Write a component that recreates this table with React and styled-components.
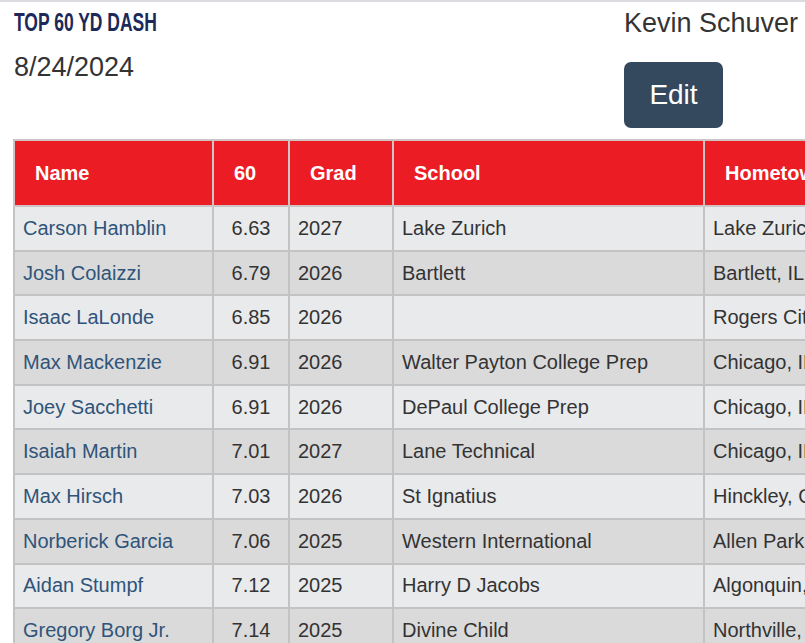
import React from 'react';
import styled, { createGlobalStyle } from 'styled-components';

const GlobalStyle = createGlobalStyle`
  html, body {
    margin: 0;
    padding: 0;
    overflow: hidden;
    background: #ffffff;
    font-family: "Liberation Sans", Arial, sans-serif;
    color: #333333;
  }
`;

const rows = [
  { name: 'Carson Hamblin', time: '6.63', grad: '2027', school: 'Lake Zurich', town: 'Lake Zurich, IL' },
  { name: 'Josh Colaizzi', time: '6.79', grad: '2026', school: 'Bartlett', town: 'Bartlett, IL' },
  { name: 'Isaac LaLonde', time: '6.85', grad: '2026', school: '', town: 'Rogers City, MI' },
  { name: 'Max Mackenzie', time: '6.91', grad: '2026', school: 'Walter Payton College Prep', town: 'Chicago, IL' },
  { name: 'Joey Sacchetti', time: '6.91', grad: '2026', school: 'DePaul College Prep', town: 'Chicago, IL' },
  { name: 'Isaiah Martin', time: '7.01', grad: '2027', school: 'Lane Technical', town: 'Chicago, IL' },
  { name: 'Max Hirsch', time: '7.03', grad: '2026', school: 'St Ignatius', town: 'Hinckley, OH' },
  { name: 'Norberick Garcia', time: '7.06', grad: '2025', school: 'Western International', town: 'Allen Park, MI' },
  { name: 'Aidan Stumpf', time: '7.12', grad: '2025', school: 'Harry D Jacobs', town: 'Algonquin, IL' },
  { name: 'Gregory Borg Jr.', time: '7.14', grad: '2025', school: 'Divine Child', town: 'Northville, MI' },
];

const App = () => {
  return (
    <Page>
      <GlobalStyle />
      <TopBar>
        <div>
          <Title>TOP 60 YD DASH</Title>
          <DateText>8/24/2024</DateText>
        </div>
        <Owner>
          <OwnerName>Kevin Schuver</OwnerName>
          <EditButton>Edit</EditButton>
        </Owner>
      </TopBar>

      <TableWrap>
        <Table>
          <colgroup>
            <col style={{ width: 199 }} />
            <col style={{ width: 76 }} />
            <col style={{ width: 104 }} />
            <col style={{ width: 311 }} />
            <col style={{ width: 220 }} />
          </colgroup>
          <thead>
            <tr>
              <Th>Name</Th>
              <Th>60</Th>
              <Th>Grad</Th>
              <Th>School</Th>
              <Th>Hometown</Th>
            </tr>
          </thead>
          <tbody>
            {rows.map((r, i) => (
              <Row key={r.name} $alt={i % 2 === 1}>
                <Td>
                  <NameLink href="#">{r.name}</NameLink>
                </Td>
                <Td $center>{r.time}</Td>
                <Td>{r.grad}</Td>
                <Td>{r.school}</Td>
                <Td>{r.town}</Td>
              </Row>
            ))}
          </tbody>
        </Table>
      </TableWrap>
    </Page>
  );
};

export default App;

const Page = styled.div`
  border-top: 2px solid #dcdce0;
  width: 805px;
  height: 641px;
  overflow: hidden;
`;

const TopBar = styled.div`
  display: flex;
  justify-content: space-between;
  padding: 0 5px 0 14px;
`;

const Title = styled.h1`
  margin: 5px 0 0;
  font-family: "Liberation Sans", Arial, sans-serif;
  font-weight: 700;
  font-size: 26.5px;
  line-height: 30px;
  color: #1b2a58;
  display: inline-block;
  transform: scaleX(0.66);
  transform-origin: left center;
  white-space: nowrap;
`;

const DateText = styled.div`
  margin-top: 14px;
  font-size: 27px;
  line-height: 32px;
  color: #333333;
`;

const Owner = styled.div`
  display: flex;
  flex-direction: column;
  align-items: flex-start;
  width: 176px;
`;

const OwnerName = styled.div`
  margin-top: 5px;
  font-size: 27px;
  line-height: 32px;
  color: #333333;
  white-space: nowrap;
`;

const EditButton = styled.button`
  margin-top: 23px;
  width: 99px;
  height: 66px;
  border: none;
  border-radius: 7px;
  background: #34495e;
  color: #ffffff;
  font-family: "Liberation Sans", Arial, sans-serif;
  font-size: 28px;
  padding: 0;
`;

const TableWrap = styled.div`
  margin-top: 11px;
  padding-left: 13px;
`;

const Table = styled.table`
  border-collapse: collapse;
  table-layout: fixed;
  width: 910px;
  border: 2px solid #c6c6c6;
`;

const Th = styled.th`
  background: #ec1c24;
  color: #ffffff;
  font-size: 20px;
  font-weight: 700;
  text-align: left;
  height: 66px;
  padding: 0 20px;
  border: 2px solid #cfc4c4;
  white-space: nowrap;
  box-sizing: border-box;
`;

const Row = styled.tr`
  background: ${(p) => (p.$alt ? '#dadadb' : '#e9eaec')};
`;

const Td = styled.td`
  font-size: 20px;
  color: #333333;
  height: 42.7px;
  padding: 0 8px;
  border: 2px solid #c3c3c3;
  text-align: ${(p) => (p.$center ? 'center' : 'left')};
  white-space: nowrap;
  overflow: hidden;
`;

const NameLink = styled.a`
  color: #2f5479;
  text-decoration: none;
`;
